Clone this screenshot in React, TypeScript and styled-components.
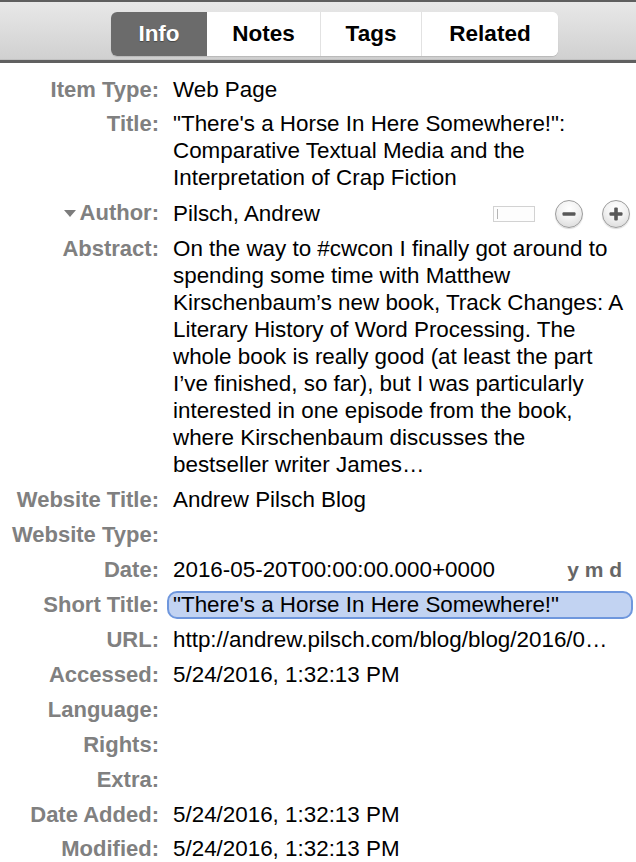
import React from "react";
import styled, { createGlobalStyle } from "styled-components";

const GlobalStyle = createGlobalStyle`
  html, body {
    margin: 0;
    padding: 0;
    background: #ffffff;
  }
  body {
    font-family: "Liberation Sans", Arial, Helvetica, sans-serif;
    -webkit-font-smoothing: antialiased;
  }
`;

const Pane = styled.div`
  width: 636px;
  height: 862px;
  overflow: hidden;
  background: #ffffff;
`;

const Toolbar = styled.div`
  height: 58px;
  border-top: 2px solid #5f5f5f;
  border-bottom: 3px solid #606060;
  background: linear-gradient(#e8e8e8, #d0d0d0);
  box-shadow: inset 0 -1px 0 #c2c2c2;
  display: flex;
  align-items: center;
  padding-left: 111px;
`;

const TabGroup = styled.div`
  display: flex;
  height: 44px;
  margin-top: 6px;
  border-radius: 6px;
  overflow: hidden;
  background: #ffffff;
  box-shadow: 0 1px 1px rgba(0, 0, 0, 0.12);
`;

const Tab = styled.div<{ $active?: boolean; $w: number; $divider?: boolean }>`
  width: ${(p) => p.$w}px;
  display: flex;
  align-items: center;
  justify-content: center;
  font-size: 22.5px;
  font-weight: bold;
  color: ${(p) => (p.$active ? "#ffffff" : "#000000")};
  background: ${(p) => (p.$active ? "#6b6b6b" : "#ffffff")};
  text-shadow: ${(p) => (p.$active ? "0 1px 1px rgba(0,0,0,0.35)" : "none")};
  border-left: ${(p) => (p.$divider ? "1px solid #e2e2e2" : "none")};
  box-sizing: border-box;
`;

const Form = styled.div`
  display: grid;
  grid-template-columns: 159px 1fr;
  column-gap: 14px;
  padding: 9.5px 6px 0 0;
  line-height: 26.95px;
`;

const Label = styled.div`
  text-align: right;
  font-weight: bold;
  font-size: 22px;
  color: #808080;
  padding: 4px 0;
  white-space: nowrap;
  display: flex;
  justify-content: flex-end;
  align-items: flex-start;
`;

const Value = styled.div<{ $pr?: number }>`
  color: #000000;
  font-size: 22.4px;
  padding: 4px ${(p) => p.$pr ?? 0}px 4px 0;
  min-width: 0;
`;

const Nowrap = styled.div`
  white-space: nowrap;
  overflow: hidden;
`;

const FlexValue = styled(Value)`
  display: flex;
  align-items: center;
`;

const Grow = styled.span`
  flex: 1;
  white-space: nowrap;
`;

const Twisty = styled.svg`
  width: 12px;
  height: 7px;
  margin: 10px 4px 0 0;
`;

const MiniInput = styled.div`
  width: 42px;
  height: 16px;
  box-sizing: border-box;
  border: 1px solid #d2d2d2;
  background: #fdfdfd;
  display: flex;
  align-items: center;
  padding-left: 3px;
  margin-right: 20px;
  margin-top: -1px;

  &::before {
    content: "";
    width: 1px;
    height: 10px;
    background: #b5b5b5;
  }
`;

const RoundButton = styled.div<{ $gap?: number }>`
  width: 28px;
  height: 28px;
  box-sizing: border-box;
  border-radius: 50%;
  border: 1px solid #9c9c9c;
  background: radial-gradient(circle at 50% 30%, #ffffff 0%, #f2f2f2 45%, #d4d4d4 100%);
  display: flex;
  align-items: center;
  justify-content: center;
  margin-left: ${(p) => p.$gap ?? 0}px;
  box-shadow: 0 1px 1px rgba(0, 0, 0, 0.15);
`;

const DatePart = styled.span`
  font-weight: bold;
  color: #666666;
  font-size: 21px;
  padding-right: 8px;
  white-space: nowrap;
`;

const HighlightBox = styled.div`
  margin: -1px -3px 0 -6px;
  padding: 0 4px;
  border: 2px solid #6f97dd;
  border-radius: 10px;
  background: #c2d3f2;
  line-height: 24px;
  white-space: nowrap;
  overflow: hidden;
`;

type Row = {
  label: string;
  value?: React.ReactNode;
};

function Minus() {
  return (
    <svg width="16" height="16" viewBox="0 0 16 16">
      <rect x="1.5" y="6.2" width="13" height="3.6" rx="1" fill="#585858" />
    </svg>
  );
}

function Plus() {
  return (
    <svg width="16" height="16" viewBox="0 0 16 16">
      <rect x="1.5" y="6.2" width="13" height="3.6" rx="1" fill="#585858" />
      <rect x="6.2" y="1.5" width="3.6" height="13" rx="1" fill="#585858" />
    </svg>
  );
}

const rows: Row[] = [
  { label: "Website Title:", value: "Andrew Pilsch Blog" },
  { label: "Website Type:" },
];

const lowerRows: Row[] = [
  { label: "URL:", value: <Nowrap>http://andrew.pilsch.com/blog/blog/2016/0…</Nowrap> },
  { label: "Accessed:", value: "5/24/2016, 1:32:13 PM" },
  { label: "Language:" },
  { label: "Rights:" },
  { label: "Extra:" },
  { label: "Date Added:", value: "5/24/2016, 1:32:13 PM" },
  { label: "Modified:", value: "5/24/2016, 1:32:13 PM" },
];

export default function App() {
  return (
    <Pane>
      <GlobalStyle />
      <Toolbar>
        <TabGroup>
          <Tab $active $w={96}>Info</Tab>
          <Tab $w={113}>Notes</Tab>
          <Tab $w={101} $divider>Tags</Tab>
          <Tab $w={137} $divider>Related</Tab>
        </TabGroup>
      </Toolbar>
      <Form>
        <Label>Item Type:</Label>
        <Value>Web Page</Value>

        <Label>Title:</Label>
        <Value>
          "There's a Horse In Here Somewhere!": Comparative Textual Media and the
          Interpretation of Crap Fiction
        </Value>

        <Label>
          <Twisty viewBox="0 0 12 7">
            <polygon points="0,0 12,0 6,7" fill="#7c7c7c" />
          </Twisty>
          Author:
        </Label>
        <FlexValue>
          <Grow>Pilsch, Andrew</Grow>
          <MiniInput />
          <RoundButton>
            <Minus />
          </RoundButton>
          <RoundButton $gap={19}>
            <Plus />
          </RoundButton>
        </FlexValue>

        <Label>Abstract:</Label>
        <Value $pr={4}>
          On the way to #cwcon I finally got around to spending some time with
          Matthew Kirschenbaum’s new book, Track Changes: A Literary History of
          Word Processing. The whole book is really good (at least the part I’ve
          finished, so far), but I was particularly interested in one episode from
          the book, where Kirschenbaum discusses the bestseller writer James…
        </Value>

        {rows.map((r) => (
          <React.Fragment key={r.label}>
            <Label>{r.label}</Label>
            <Value>{r.value}</Value>
          </React.Fragment>
        ))}

        <Label>Date:</Label>
        <FlexValue>
          <Grow>2016-05-20T00:00:00.000+0000</Grow>
          <DatePart>y m d</DatePart>
        </FlexValue>

        <Label>Short Title:</Label>
        <Value>
          <HighlightBox>"There's a Horse In Here Somewhere!"</HighlightBox>
        </Value>

        {lowerRows.map((r) => (
          <React.Fragment key={r.label}>
            <Label>{r.label}</Label>
            <Value>{r.value}</Value>
          </React.Fragment>
        ))}
      </Form>
    </Pane>
  );
}
